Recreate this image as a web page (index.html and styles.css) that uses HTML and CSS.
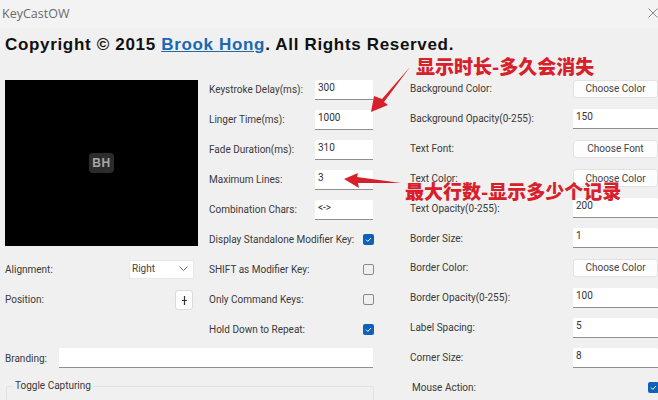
FILE: index.html
```html
<!DOCTYPE html>
<html lang="en">
<head>
<meta charset="utf-8">
<title>KeyCastOW</title>
<link rel="stylesheet" href="styles.css">
</head>
<body>
<div class="window">
  <header class="titlebar">
    <span class="title">KeyCastOW</span>
    <svg class="close" width="10" height="10" viewBox="0 0 10 10"><path d="M.5.5l9 9M9.5.5l-9 9" stroke="#8a8a8a" fill="none"/></svg>
  </header>
  <h1 class="copyright">Copyright © 2015 <a href="#">Brook Hong</a>. All Rights Reserved.</h1>
  <main class="panel">
    <section class="left">
      <div class="preview"><span class="badge">BH</span></div>
      <div class="left-rows">
        <div class="row"><label>Alignment:</label><div class="select"><span>Right</span><svg width="9" height="5" viewBox="0 0 9 5"><path d="M.5.5l4 4 4-4" stroke="#666" fill="none"/></svg></div></div>
        <div class="row"><label>Position:</label><button class="pos" aria-label="Move"><svg width="7" height="11" viewBox="0 0 7 11"><path d="M3.5 1v9M1 5.5h5" stroke="#333" stroke-width="1.2" fill="none"/></svg></button></div>
      </div>
    </section>
    <section class="middle">
      <div class="row"><label>Keystroke Delay(ms):</label><div class="input">300</div></div>
      <div class="row"><label>Linger Time(ms):</label><div class="input">1000</div></div>
      <div class="row"><label>Fade Duration(ms):</label><div class="input">310</div></div>
      <div class="row"><label>Maximum Lines:</label><div class="input">3</div></div>
      <div class="row"><label>Combination Chars:</label><div class="input">&lt;-&gt;</div></div>
      <div class="row"><label>Display Standalone Modifier Key:</label><span class="check on"><svg width="11" height="11" viewBox="0 0 11 11"><path d="M3 5.6l1.8 1.8L8 4" stroke="#fff" fill="none"/></svg></span></div>
      <div class="row"><label>SHIFT as Modifier Key:</label><span class="check"></span></div>
      <div class="row"><label>Only Command Keys:</label><span class="check"></span></div>
      <div class="row"><label>Hold Down to Repeat:</label><span class="check on"><svg width="11" height="11" viewBox="0 0 11 11"><path d="M3 5.6l1.8 1.8L8 4" stroke="#fff" fill="none"/></svg></span></div>
    </section>
    <section class="right">
      <div class="row"><label>Background Color:</label><button class="btn">Choose Color</button></div>
      <div class="row"><label>Background Opacity(0-255):</label><div class="input wide">150</div></div>
      <div class="row"><label>Text Font:</label><button class="btn">Choose Font</button></div>
      <div class="row"><label>Text Color:</label><button class="btn">Choose Color</button></div>
      <div class="row"><label>Text Opacity(0-255):</label><div class="input wide">200</div></div>
      <div class="row"><label>Border Size:</label><div class="input wide">1</div></div>
      <div class="row"><label>Border Color:</label><button class="btn">Choose Color</button></div>
      <div class="row"><label>Border Opacity(0-255):</label><div class="input wide">100</div></div>
      <div class="row"><label>Label Spacing:</label><div class="input wide">5</div></div>
      <div class="row"><label>Corner Size:</label><div class="input wide">8</div></div>
      <div class="row mouse"><label>Mouse Action:</label><span class="check on"><svg width="11" height="11" viewBox="0 0 11 11"><path d="M3 5.6l1.8 1.8L8 4" stroke="#fff" fill="none"/></svg></span></div>
    </section>
    <div class="branding"><label>Branding:</label><div class="input fill"></div></div>
    <fieldset class="toggle"><legend>Toggle Capturing</legend></fieldset>
  </main>
  <div class="note note-one">显示时长-多久会消失</div>
  <div class="note note-two">最大行数-显示多少个记录</div>
  <svg class="arrows" width="658" height="400" viewBox="0 0 658 400">
    <path d="M410 67L382 99L374 96L371 112L388 105L384 102Z" fill="#d8202a"/>
    <path d="M401 183L357 177L358 173L344 179L359 188L358 183Z" fill="#d8202a"/>
  </svg>
</div>
</body>
</html>
```
FILE: styles.css
```css
* { box-sizing: border-box; }
html, body { margin: 0; padding: 0; }
body { width: 658px; height: 400px; overflow: hidden; background: #f0f0f0; font-family: Roboto, "Open Sans", sans-serif; font-size: 10px; color: #3a3a3a; }
.window { position: relative; width: 658px; height: 400px; overflow: hidden; }
.titlebar { height: 28px; background: #f3f3f3; display: flex; align-items: center; justify-content: space-between; padding: 0 0 2px 2px; }
.title { font-family: "Open Sans", sans-serif; font-size: 12.5px; color: #6a6a6a; }
.close { flex: none; }
.copyright { margin: 7px 0 0 5px; height: 45px; font: bold 17px/20px "Liberation Sans", sans-serif; letter-spacing: .67px; color: #111; white-space: nowrap; }
.copyright a { color: #1a68b0; text-decoration: underline; }
.panel { display: grid; grid-template-columns: 193px 164px 274px; column-gap: 11px; padding-left: 5px; grid-template-rows: 267px 33px auto; }
.left { grid-column: 1; grid-row: 1; }
.middle { grid-column: 2; grid-row: 1; margin-top: -5px; display: grid; grid-auto-rows: 29.9px; }
.right { grid-column: 3; grid-row: 1 / span 3; margin-top: -6px; margin-left: 26px; display: grid; grid-auto-rows: 29.85px; align-content: start; }
.preview { height: 166px; background: #000; display: flex; align-items: center; justify-content: center; }
.badge { width: 25px; height: 20px; border-radius: 4px; background: #2c2c2c; color: #a8a8a8; font: bold 12px/20px "Liberation Sans", sans-serif; letter-spacing: .5px; text-align: center; }
.left-rows { display: grid; grid-auto-rows: 30px; margin-top: 8px; }
.row { display: flex; align-items: center; justify-content: space-between; white-space: nowrap; }
.input { width: 58px; height: 20px; flex: none; background: #fff; border-bottom: 1px solid #8f8f8f; border-radius: 2px 2px 0 0; padding: 0 3px 3px; line-height: 16px; font-size: 10px; color: #333; }
.input.wide { width: 85px; }
.input.fill { flex: 1; width: auto; }
.select { width: 65px; height: 19px; margin-right: 4px; background: #fff; border: 1px solid #e8e8e8; border-radius: 2px; display: flex; align-items: center; justify-content: space-between; padding: 0 5px 2px 2px; color: #444; font-size: 10px; }
.pos { width: 18px; height: 20px; margin: 2px 5px 0 0; padding: 0; background: #fdfdfd; border: 1px solid #dcdcdc; border-radius: 3px; display: flex; align-items: center; justify-content: center; }
.btn { flex: none; width: 85px; height: 18px; padding: 0; background: #fdfdfd; border: 1px solid #e2e2e2; border-radius: 3px; font: 10px/15px Roboto, "Open Sans", sans-serif; color: #444; }
.check { width: 11px; height: 11px; flex: none; margin-right: -1px; border: 1px solid #8a8a8a; border-radius: 2px; display: block; }
.check.on { background: #0b62b8; border: 0; }
.check svg { display: block; }
.mouse { padding-left: 2px; width: 248px; }
.branding { grid-column: 1 / span 2; grid-row: 2; display: flex; align-items: center; gap: 12px; height: 20px; margin-top: 1px; }
.toggle { grid-column: 1 / span 2; grid-row: 3; margin: 0 0 0 1px; padding: 0; height: 40px; border: 1px solid #e2e2e2; border-radius: 2px; width: 368px; }
.toggle legend { margin-left: 6px; padding: 0 2px; font-size: 10px; line-height: 12px; }
.note { position: absolute; font: 900 19px/22px "Noto Sans CJK SC", sans-serif; color: #d8202a; white-space: nowrap; }
.note-one { left: 416px; top: 55px; }
.note-two { left: 405px; top: 180px; }
.arrows { position: absolute; left: 0; top: 0; pointer-events: none; }
```
